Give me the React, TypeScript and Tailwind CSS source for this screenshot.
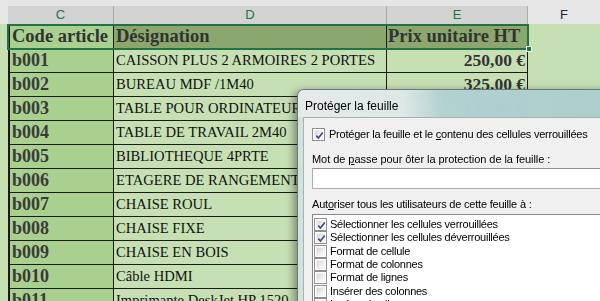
import React from "react";

type Row = { code: string; label: string; price: string; times?: boolean };

const rows: Row[] = [
  { code: "b001", label: "CAISSON PLUS 2 ARMOIRES 2 PORTES", price: "250,00 €" },
  { code: "b002", label: "BUREAU MDF /1M40", price: "325,00 €" },
  { code: "b003", label: "TABLE POUR ORDINATEUR", price: "175,00 €" },
  { code: "b004", label: "TABLE DE TRAVAIL 2M40", price: "420,00 €" },
  { code: "b005", label: "BIBLIOTHEQUE 4PRTE", price: "280,00 €" },
  { code: "b006", label: "ETAGERE DE RANGEMENT", price: "150,00 €" },
  { code: "b007", label: "CHAISE ROUL", price: "95,00 €" },
  { code: "b008", label: "CHAISE FIXE", price: "45,00 €" },
  { code: "b009", label: "CHAISE EN BOIS", price: "35,00 €" },
  { code: "b010", label: "Câble HDMI", price: "12,00 €", times: true },
  { code: "b011", label: "Imprimante DeskJet HP 1520", price: "65,00 €", times: true },
];

function Check({ checked }: { checked: boolean }) {
  return (
    <div className="w-[13px] h-[13px] shrink-0 border border-[#8e8f8f] bg-white p-[1px]">
      <div className="w-full h-full bg-[linear-gradient(135deg,#d6d7d9_0%,#eeeeee_60%,#fbfbfb_100%)] border border-[#f2f2f2] relative">
        {checked && (
          <svg viewBox="0 0 9 9" className="absolute inset-0 w-[9px] h-[9px]">
            <path d="M1.3 4.6 L3.4 7 L7.8 1.4" stroke="#3b4a7e" strokeWidth="1.6" fill="none" />
          </svg>
        )}
      </div>
    </div>
  );
}

const listItems: [string, boolean][] = [
  ["Sélectionner les cellules verrouillées", true],
  ["Sélectionner les cellules déverrouillées", true],
  ["Format de cellule", false],
  ["Format de colonnes", false],
  ["Format de lignes", false],
  ["Insérer des colonnes", false],
  ["Insérer des lignes", false],
];

export default function App() {
  return (
    <div className="relative w-[600px] h-[301px] overflow-hidden bg-[#c6e0b4]">
      {/* top strip */}
      <div className="h-[6px] bg-[#e6e6e6]" />
      {/* column headers */}
      <div className="flex h-[18px] text-[13px] font-['Liberation_Sans',sans-serif] leading-[18px]">
        <div className="w-[8px] bg-[#e6e6e6]" />
        <div className="w-[106px] bg-[#d2d2d2] text-[#217346] text-center border-r border-[#ababab]">C</div>
        <div className="w-[273px] bg-[#d2d2d2] text-[#217346] text-center border-r border-[#ababab]">D</div>
        <div className="w-[141px] bg-[#d2d2d2] text-[#217346] text-center border-r border-[#ababab]">E</div>
        <div className="flex-1 bg-[#e6e6e6] text-[#262626] text-center">F</div>
      </div>
      {/* table header */}
      <div className="flex h-[25px] font-['Liberation_Serif',serif] font-bold text-[18.5px] leading-[24px] text-[#333333]">
        <div className="w-[8px]" />
        <div className="w-[106px] bg-[#a9d08e] border-l-2 border-r border-b border-[#1a1a1a] pl-[2px] whitespace-nowrap overflow-hidden">Code article</div>
        <div className="w-[273px] bg-[#8ca76e] border-r border-b border-[#1a1a1a] pl-[2px] whitespace-nowrap overflow-hidden">Désignation</div>
        <div className="w-[141px] bg-[#8ca76e] border-r border-b border-[#1a1a1a] pl-[1px] whitespace-nowrap overflow-hidden">Prix unitaire HT</div>
      </div>
      {/* data rows */}
      {rows.map((r) => (
        <div key={r.code} className="flex h-[24px] font-['Liberation_Serif',serif] leading-[23px]">
          <div className="w-[8px]" />
          <div className="w-[106px] bg-[#a9d08e] border-l-2 border-r border-b border-[#1a1a1a] pl-[2px] font-bold text-[18px] text-[#3a3a3a]">{r.code}</div>
          <div className="w-[273px] bg-[#c6e0b4] border-r border-b border-[#1a1a1a] pl-[2px] text-[14.6px] text-[#111111] whitespace-nowrap overflow-hidden">{r.label}</div>
          <div className="w-[141px] bg-[#c6e0b4] border-r border-b border-[#1a1a1a] pr-[2px] text-right font-bold text-[17.5px] text-[#333333]">{r.price}</div>
        </div>
      ))}

      {/* selection outline */}
      <div className="absolute left-[7px] top-[24px] w-[522px] h-[26px] border-2 border-[#217346] pointer-events-none" />
      <div className="absolute left-[526px] top-[46px] w-[6px] h-[6px] bg-[#217346] border border-white" />

      {/* dialog */}
      <div className="absolute left-[297px] top-[89px] w-[340px] h-[230px] rounded-tl-[7px] border border-[rgba(30,50,60,0.6)] bg-[rgba(214,226,227,0.88)] backdrop-blur-[2px] shadow-[-3px_2px_8px_rgba(0,0,0,0.4)] flex flex-col overflow-hidden font-['Liberation_Sans',sans-serif] text-[12px] text-black">
        <div className="h-[27px] shrink-0 flex items-center pl-[7px] pt-[4px] bg-[linear-gradient(90deg,rgba(230,236,236,0.9)_0px,rgba(224,232,232,0.85)_105px,rgba(168,205,204,0.8)_145px,rgba(160,201,200,0.8)_100%)]">
          Protéger la feuille
        </div>
        <div className="flex-1 ml-[5px] bg-[#f0f0f0] border-t border-l border-[#a3b3b6] pl-[8px] pt-[10px] flex flex-col text-[11px] tracking-[-0.05px]">
          <div className="flex items-center h-[13px] gap-[4px]">
            <Check checked />
            <span className="leading-[15px] whitespace-nowrap tracking-[-0.22px]">
              Protéger la feuille et le <u>c</u>ontenu des cellules verrouillées
            </span>
          </div>
          <div className="mt-[11px] leading-[15px] whitespace-nowrap">
            Mot de <u>p</u>asse pour ôter la protection de la feuille :
          </div>
          <div className="mt-[1px] h-[21px] w-[320px] bg-white border border-[#abadb3] border-t-[#8d9199]" />
          <div className="mt-[8px] leading-[15px] whitespace-nowrap tracking-[-0.2px]">
            Aut<u>o</u>riser tous les utilisateurs de cette feuille à :
          </div>
          <div className="mt-[2px] w-[320px] h-[120px] bg-white border border-[#828790] pt-[3px] pl-[1px] flex flex-col tracking-[-0.25px]">
            {listItems.map(([t, c]) => (
              <div key={t} className="h-[13.33px] flex items-center gap-[3px] shrink-0">
                <Check checked={c} />
                <span className="leading-[13px] whitespace-nowrap">{t}</span>
              </div>
            ))}
          </div>
        </div>
      </div>
    </div>
  );
}
